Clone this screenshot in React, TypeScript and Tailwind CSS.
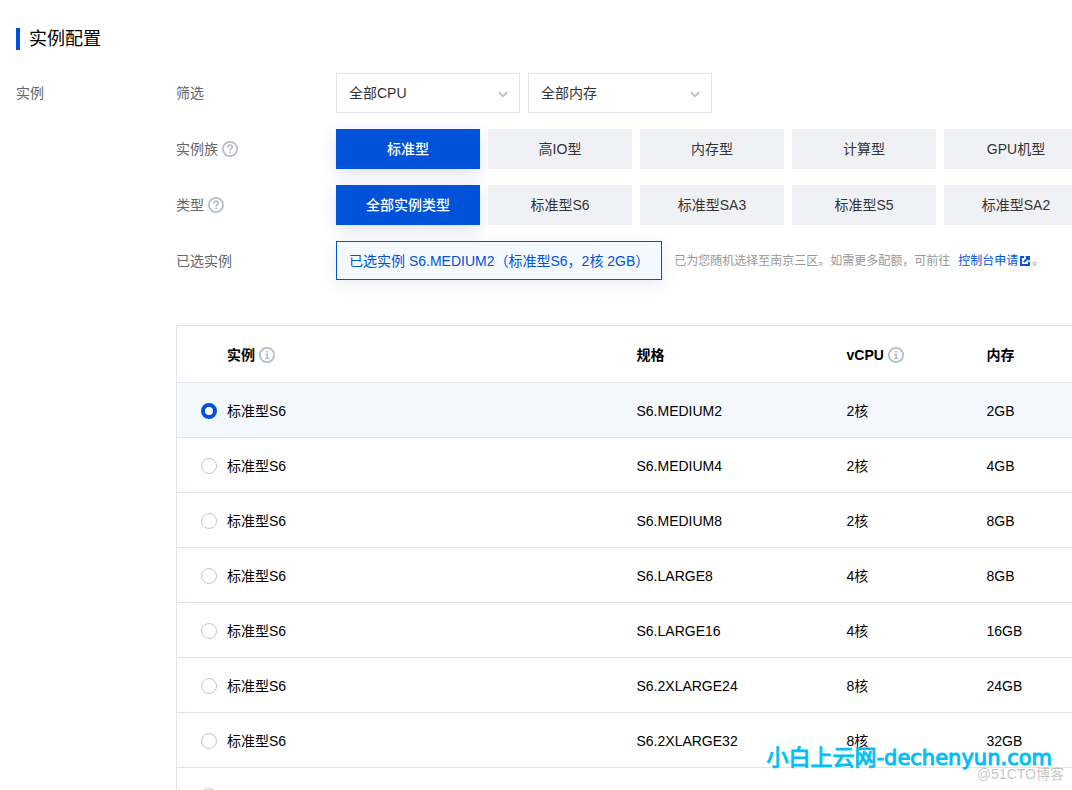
import { useState } from "react";

const families = ["标准型", "高IO型", "内存型", "计算型", "GPU机型"];

const types = ["全部实例类型", "标准型S6", "标准型SA3", "标准型S5", "标准型SA2"];

const instances = [
  { family: "标准型S6", spec: "S6.MEDIUM2", cpu: "2核", memory: "2GB" },
  { family: "标准型S6", spec: "S6.MEDIUM4", cpu: "2核", memory: "4GB" },
  { family: "标准型S6", spec: "S6.MEDIUM8", cpu: "2核", memory: "8GB" },
  { family: "标准型S6", spec: "S6.LARGE8", cpu: "4核", memory: "8GB" },
  { family: "标准型S6", spec: "S6.LARGE16", cpu: "4核", memory: "16GB" },
  { family: "标准型S6", spec: "S6.2XLARGE24", cpu: "8核", memory: "24GB" },
  { family: "标准型S6", spec: "S6.2XLARGE32", cpu: "8核", memory: "32GB" },
  { family: "", spec: "", cpu: "", memory: "" },
];

function HelpIcon() {
  return (
    <svg className="size-4 shrink-0" viewBox="0 0 16 16" fill="none" stroke="#b4bdcc">
      <circle cx="8" cy="8" r="7.1" strokeWidth="1.8" />
      <path d="M5.7 6.5C5.7 5.1 6.7 4.2 8 4.2s2.2.8 2.2 2c0 1.5-2.1 1.6-2.1 3.3" strokeWidth="1.7" />
      <path d="M8.1 10.4v1.8" strokeWidth="1.8" />
    </svg>
  );
}

function InfoIcon() {
  return (
    <svg className="size-4 shrink-0" viewBox="0 0 16 16" fill="none" stroke="#b4bdcc">
      <circle cx="8" cy="8" r="7.1" strokeWidth="1.8" />
      <path d="M8 4v1.8" strokeWidth="1.9" />
      <path d="M6.2 7.5h2v4M6 11.4h4.2" strokeWidth="1.5" />
    </svg>
  );
}

function LinkIcon() {
  return (
    <svg className="size-2.5 shrink-0" viewBox="0 0 10 10" fill="none" stroke="#0052d9" strokeWidth="1.9">
      <path d="M4.2 1H1v8h8V5.8" />
      <path d="M5.8 1H9v3.2M9 1L3.8 6.2" />
    </svg>
  );
}

function FilterSelect({ label, option }: { label: string; option: string }) {
  return (
    <div className="relative w-46">
      <select
        aria-label={label}
        className="h-10 w-full appearance-none border border-[#dfe3eb] bg-white px-3 text-[#333]"
      >
        <option>{option}</option>
      </select>
      <svg
        className="pointer-events-none absolute top-4 right-3 h-2.5 w-2.5"
        viewBox="0 0 10 10"
        fill="none"
        stroke="#bbc3d0"
        strokeWidth="1.9"
      >
        <path d="M.7 3L5 7.2 9.3 3" />
      </svg>
    </div>
  );
}

function ButtonGroup({ items }: { items: string[] }) {
  const [active, setActive] = useState(items[0]);

  return (
    <div className="flex gap-2">
      {items.map((item) => (
        <button
          key={item}
          type="button"
          onClick={() => setActive(item)}
          className={
            item === active
              ? "h-10 w-36 shrink-0 bg-[#0052d9] font-medium text-white shadow-[0_4px_16px_rgba(0,50,140,0.14)]"
              : "h-10 w-36 shrink-0 bg-[#f0f1f5] text-[#333]"
          }
        >
          {item}
        </button>
      ))}
    </div>
  );
}

function Field({ label, help, children }: { label: string; help?: boolean; children: React.ReactNode }) {
  return (
    <div className="flex min-h-10 items-start">
      <div className="flex h-10 w-40 shrink-0 items-center gap-1 text-[#666]">
        {label}
        {help && <HelpIcon />}
      </div>
      {children}
    </div>
  );
}

export default function App() {
  const [selected, setSelected] = useState(0);
  const current = instances[selected];

  return (
    <main className="relative h-screen overflow-hidden bg-white pt-[27px] pl-4 font-['Liberation_Sans','Noto_Sans_CJK_SC',sans-serif] text-sm leading-5 text-black">
      <h2 className="flex items-center gap-[9px] text-lg leading-6 text-black">
        <span className="h-[22px] w-1 bg-[#0052d9]" />
        实例配置
      </h2>

      <div className="mt-[22px] flex">
        <div className="flex h-10 w-40 shrink-0 items-center text-[#666]">实例</div>

        <div className="min-w-0 flex-1">
          <div className="flex flex-col gap-4">
            <Field label="筛选">
              <div className="flex gap-2">
                <FilterSelect label="CPU" option="全部CPU" />
                <FilterSelect label="内存" option="全部内存" />
              </div>
            </Field>

            <Field label="实例族" help>
              <ButtonGroup items={families} />
            </Field>

            <Field label="类型" help>
              <ButtonGroup items={types} />
            </Field>

            <Field label="已选实例">
              <div className="flex h-[39px] shrink-0 items-center border border-[#0052d9] bg-[#f4f8ff] px-3 whitespace-nowrap text-[#0052d9] shadow-[0_4px_16px_rgba(0,50,140,0.1)]">
                已选实例 {current.spec}（{current.family}，{current.cpu} {current.memory}）
              </div>
              <p className="ml-3 flex h-10 items-center text-xs whitespace-nowrap text-[#999]">
                已为您随机选择至南京三区。如需更多配额，可前往
                <a href="#apply" className="mr-0.5 ml-2 flex items-center gap-0.5 text-[#0052d9]">
                  控制台申请
                  <LinkIcon />
                </a>
                。
              </p>
            </Field>
          </div>

          <table className="mt-11 w-full min-w-240 table-fixed border-collapse border border-[#e1e5eb] text-left">
            <thead>
              <tr className="h-[57px] border-b border-[#e1e5eb]">
                <th className="w-[450px] pt-0.5 pl-[50px] font-bold">
                  <span className="flex items-center gap-1">
                    实例 <InfoIcon />
                  </span>
                </th>
                <th className="w-[210px] px-2.5 pt-0.5 font-bold">规格</th>
                <th className="w-[140px] px-2.5 pt-0.5 font-bold">
                  <span className="flex items-center gap-1">
                    vCPU <InfoIcon />
                  </span>
                </th>
                <th className="px-2.5 pt-0.5 font-bold">内存</th>
              </tr>
            </thead>
            <tbody>
              {instances.map((item, index) => (
                <tr
                  key={index}
                  className={
                    index === selected
                      ? "h-[55px] border-b border-[#e1e5eb] bg-[#f4f8ff]"
                      : "h-[55px] border-b border-[#e1e5eb]"
                  }
                >
                  <td className="pt-0.5 pl-6">
                    <label className="flex items-center gap-2.5">
                      <input
                        type="radio"
                        name="instance"
                        checked={index === selected}
                        onChange={() => setSelected(index)}
                        className="size-4 appearance-none rounded-full border border-[#c1c6d0] bg-white checked:border-4 checked:border-[#0052d9]"
                      />
                      {item.family}
                    </label>
                  </td>
                  <td className="px-2.5 pt-0.5">{item.spec}</td>
                  <td className="px-2.5 pt-0.5">{item.cpu}</td>
                  <td className="px-2.5 pt-0.5">{item.memory}</td>
                </tr>
              ))}
            </tbody>
          </table>
        </div>
      </div>

      <div className="pointer-events-none absolute right-2 bottom-2 flex flex-col items-end whitespace-nowrap">
        <span className="mr-3 flex items-center font-['DejaVu_Sans','Noto_Sans_CJK_SC',sans-serif] text-[21px] leading-4 text-[#00bff5] [-webkit-text-stroke:1px_#00bff5]">
          <span className="text-[22px] leading-4">小白上云网</span>
          <span>-dechenyun.com</span>
        </span>
        <span className="text-sm leading-4 text-black/25">@51CTO博客</span>
      </div>
    </main>
  );
}
